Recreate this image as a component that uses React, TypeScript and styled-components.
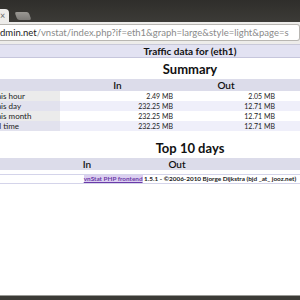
import styled, { createGlobalStyle } from "styled-components"

const Global = createGlobalStyle`
    html, body {
        margin: 0;
        padding: 0;
        background: #ffffff;
        overflow: hidden;
    }
    body {
        font-family: Lato, "Open Sans", sans-serif;
    }
`

const summary = [
    { label: "This hour", rx: "2.49 MB", tx: "2.05 MB" },
    { label: "This day", rx: "232.25 MB", tx: "12.71 MB" },
    { label: "This month", rx: "232.25 MB", tx: "12.71 MB" },
    { label: "All time", rx: "232.25 MB", tx: "12.71 MB" },
]

export default function App() {
    return (
        <Screen>
            <Global />
            <TabBar>
                <Tab>×</Tab>
                <NewTab />
            </TabBar>
            <AddressRow>
                <UrlField>
                    <Host>dmin.net</Host>
                    <Path>/vnstat/index.php?if=eth1&amp;graph=large&amp;style=light&amp;page=s</Path>
                </UrlField>
            </AddressRow>
            <Viewport>
                <Content>
                    <TitleBar>Traffic data for (eth1)</TitleBar>
                    <Heading $top={4}>Summary</Heading>
                    <Table $w={396}>
                        <thead>
                            <tr>
                                <Th $w={68}></Th>
                                <Th $w={115}>In</Th>
                                <Th $w={102}>Out</Th>
                                <Th>Total</Th>
                            </tr>
                        </thead>
                        <tbody>
                            {summary.map((row, i) => (
                                <tr key={row.label}>
                                    <Label $odd={i % 2 === 1}>{row.label}</Label>
                                    <Num $odd={i % 2 === 1}>{row.rx}</Num>
                                    <Num $odd={i % 2 === 1}>{row.tx}</Num>
                                    <Num $odd={i % 2 === 1}></Num>
                                </tr>
                            ))}
                        </tbody>
                    </Table>
                    <Heading $top={10}>Top 10 days</Heading>
                    <Table $w={540}>
                        <thead>
                            <tr>
                                <Th $w={105}></Th>
                                <Th $w={37}></Th>
                                <Th $w={50}>In</Th>
                                <Th $w={130}>Out</Th>
                                <Th>Total</Th>
                            </tr>
                        </thead>
                    </Table>
                    <Footer>
                        <Link href="#">vnStat PHP frontend</Link> 1.5.1 - ©2006-2010 Bjorge Dijkstra (bjd _at_ jooz.net)
                    </Footer>
                </Content>
            </Viewport>
            <BottomBar />
        </Screen>
    )
}

const Screen = styled.div`
    width: 300px;
    height: 300px;
    display: flex;
    flex-direction: column;
    overflow: hidden;
`

const TabBar = styled.div`
    height: 22px;
    flex: none;
    background: linear-gradient(#2f2e2b, #3c3b37);
    display: flex;
    align-items: flex-end;
    gap: 3px;
`

const Tab = styled.div`
    width: 9px;
    height: 13px;
    background: #edecea;
    border-radius: 0 4px 0 0;
    color: #666;
    font-size: 9px;
    line-height: 13px;
`

const NewTab = styled.div`
    width: 14px;
    height: 8px;
    margin: 0 0 2px 4px;
    background: linear-gradient(#9a9893, #7d7b77);
    border-radius: 2px;
    transform: skewX(20deg);
`

const AddressRow = styled.div`
    height: 22px;
    flex: none;
    background: #edecea;
    padding: 2px 0 3px 0;
    box-sizing: border-box;
    display: flex;
`

const UrlField = styled.div`
    flex: 1;
    background: #fff;
    border: 1px solid #b8b6b2;
    border-left: none;
    border-radius: 0 3px 3px 0;
    font-family: Lato, "Open Sans", sans-serif;
    font-size: 9.5px;
    line-height: 15px;
    white-space: nowrap;
    overflow: hidden;
`

const Host = styled.span`
    color: #222;
`

const Path = styled.span`
    color: #8a8a8a;
`

const Viewport = styled.div`
    flex: 1;
    overflow: hidden;
    border-top: 1px solid #c9c9d9;
`

const Content = styled.div`
    width: 540px;
    margin-left: -80px;
    display: flex;
    flex-direction: column;
    align-items: center;
`

const TitleBar = styled.div`
    align-self: stretch;
    height: 12px;
    background: #e2e2f2;
    border-bottom: 1px solid #c6c6dc;
    font-size: 10px;
    font-weight: 700;
    line-height: 12px;
    text-align: center;
    color: #111;
`

const Heading = styled.h2<{ $top: number }>`
    margin: ${p => p.$top}px 0 3px;
    font-size: 13px;
    line-height: 14px;
    font-weight: 700;
    color: #111;
`

const Table = styled.table<{ $w: number }>`
    width: ${p => p.$w}px;
    border-collapse: collapse;
    table-layout: fixed;
`

const Th = styled.th<{ $w?: number }>`
    width: ${p => (p.$w ? `${p.$w}px` : "auto")};
    height: 12px;
    padding: 0;
    background: #dcdcea;
    font-size: 10px;
    font-weight: 600;
    line-height: 12px;
    text-align: center;
    color: #111;
`

const Label = styled.td<{ $odd: boolean }>`
    height: 10px;
    padding: 0;
    background: ${p => (p.$odd ? "#e2e2ee" : "#ebebeb")};
    font-size: 8px;
    line-height: 10px;
    color: #222;
    white-space: nowrap;
`

const Num = styled.td<{ $odd: boolean }>`
    height: 10px;
    padding: 0 2px 0 0;
    background: ${p => (p.$odd ? "#efeffa" : "#ffffff")};
    font-size: 7px;
    line-height: 10px;
    text-align: right;
    color: #222;
`

const Footer = styled.div`
    align-self: stretch;
    margin-top: 4px;
    height: 8px;
    border-top: 1px solid #d4d4ea;
    border-bottom: 1px solid #d4d4ea;
    font-size: 6.4px;
    font-weight: 700;
    line-height: 8px;
    text-align: center;
    color: #222;
`

const Link = styled.a`
    background: #dcd0f0;
    color: #6a3aa8;
    text-decoration: underline;
`

const BottomBar = styled.div`
    height: 4px;
    flex: none;
    background: #3c3b37;
    border-top: 1px solid #9a9a96;
`
